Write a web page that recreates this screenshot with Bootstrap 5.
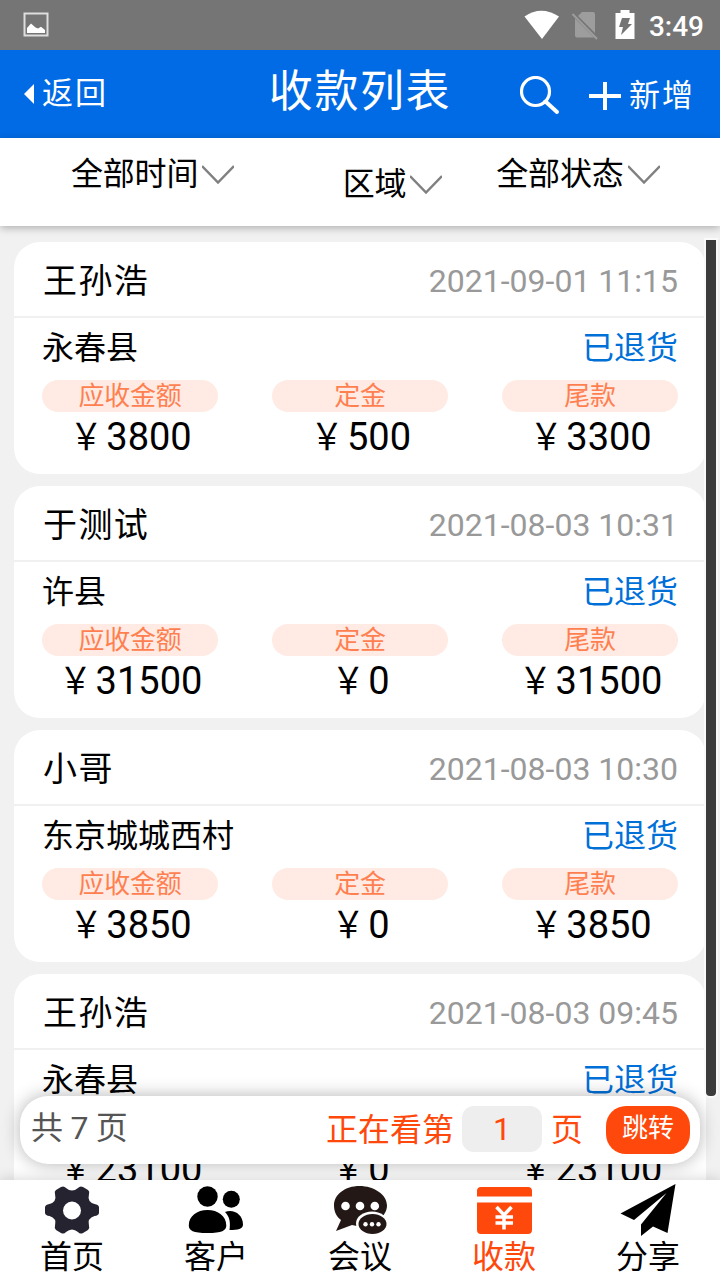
<!DOCTYPE html>
<html lang="zh-CN">
<head>
<meta charset="utf-8">
<meta name="viewport" content="width=device-width, initial-scale=1">
<title>收款列表</title>
<link href="https://cdn.jsdelivr.net/npm/bootstrap@5.3.0/dist/css/bootstrap.min.css" rel="stylesheet">
<style>
  body { font-family: Roboto, "Noto Sans CJK SC", sans-serif; font-size: 32px; line-height: 40px; color: #000; background: #f1f1f1; }
  svg { display: block; flex: none; }
  .screen { height: 1280px; }
  .status-bar { height: 50px; background: #757575; padding: 0 16px 0 23px; }
  .clock { font-size: 28px; font-weight: 500; line-height: 50px; padding-top: 3px; margin-left: 14px; }
  .wifi { margin-right: 2px; }
  .sim { margin: 0 16px 0 9px; }
  .title-bar { height: 88px; background: #006be5; padding: 0 25px 0 24px; }
  .page-title { font-size: 44px; line-height: 85px; letter-spacing: 1.6px; padding-left: 1px; }
  .side-link { font-size: 31px; letter-spacing: 2px; }
  .new-icon { margin-left: 29px; }
  .filters { height: 88px; padding: 16px 60px 0 71px; box-shadow: 0 2px 8px rgba(0,0,0,.28); z-index: 2; }
  .filters span { letter-spacing: -.2px; }
  .filters svg { margin: 2px 0 0 4px; }
  .filter-mid { margin: 10px 54px 0 108.500px; }
  .receipts { padding: 16px 14px 0; gap: 12px; }
  .receipt { height: 232px; border-radius: 26px; flex: none; }
  .receipt-head { height: 76px; border-bottom: 2px solid #f0f0f0; padding: 4px 28px 0; }
  .customer { font-size: 34px; letter-spacing: 1.4px; padding-left: 1px; }
  .stamp { color: #999; }
  .receipt-body { padding: 10px 28px 0; }
  .state { color: #0070d9; }
  .amounts { margin-top: 12px; }
  .amount { width: 176px; }
  .amount-tag { height: 32px; line-height: 33px; font-size: 26px; letter-spacing: -.2px; color: #ff7f50; background: #ffebe4; }
  .amount-value { font-size: 38px; line-height: 50px; }
  .yen { display: inline-block; width: 38px; font-size: 33px; line-height: 40px; padding-right: 2px; transform: translateY(-1px) scaleY(1.12); }
  .scroll-thumb { right: 2px; top: 238px; width: 14px; height: 860px; background: #3c3c3c; border: 2px solid #fafafa; border-radius: 0 0 6px 6px; z-index: 3; }
  .pager { left: 20px; right: 20px; top: 1096px; height: 68px; border-radius: 28px; box-shadow: 0 0 18px rgba(0,0,0,.3); padding: 0 10px 0 11px; z-index: 4; color: #ff490c; }
  .pager-total { color: #555; word-spacing: -.5px; padding-bottom: 5px; }
  .page-input { width: 80px; height: 46px; line-height: 47px; border-radius: 12px; background: #eee; margin: 0 9px 2px 8px; }
  .jump { width: 84px; height: 48px; line-height: 45px; border-radius: 20px; background: #ff490c; font-size: 26px; margin-left: 23px; }
  .tabs { top: 1180px; height: 100px; z-index: 5; box-shadow: 0 0 14px rgba(0,0,0,.18); }
  .tab-item { padding-top: 4px; }
  .tab-item span { line-height: 43px; }
  .tab-active { color: #ff490c; }
</style>
</head>
<body>
<div class="screen position-relative overflow-hidden d-flex flex-column">

  <div class="status-bar d-flex align-items-center justify-content-between text-white flex-shrink-0">
    <svg width="26" height="26" viewBox="0 0 26 26"><rect x="1.5" y="1.5" width="23" height="22" fill="none" stroke="#dedede" stroke-width="2"/><path d="M4 21V16l4-4.500 4.500 4 2.500 1 3-1.700L22 18v3z" fill="#fff"/></svg>
    <div class="d-flex align-items-center">
      <svg class="wifi" width="36" height="30" viewBox="0 0 36 30"><path d="M.5 6.500Q17-5 35 6.500L18 29z" fill="#fff"/></svg>
      <svg class="sim" width="28" height="30" viewBox="0 0 28 30"><path d="M11 2h11q2 0 2 2v19L7 6zM4 8.500l19 19H6q-2 0-2-2z" fill="#9d9d9d"/><path d="M1.500 4L26 29" stroke="#9d9d9d" stroke-width="2"/></svg>
      <svg width="20" height="30" viewBox="0 0 20 30"><path d="M5.500 0h9v3H19.500V29H.5V3h5z" fill="#fff"/><path d="M7 8h8l-2 6h4L6 25l2-8H4z" fill="#757575"/></svg>
      <span class="clock">3:49</span>
    </div>
  </div>

  <header class="title-bar row g-0 text-white flex-shrink-0">
    <div class="col-4 d-flex align-items-center side-link">
      <svg class="me-2" width="10" height="20" viewBox="0 0 10 20"><path d="M10 0v20L0 10z" fill="#fff"/></svg><span>返回</span>
    </div>
    <h1 class="page-title col-4 text-center text-nowrap fw-normal m-0">收款列表</h1>
    <div class="col-4 d-flex align-items-center justify-content-end side-link pt-1">
      <svg width="40" height="40" viewBox="0 0 40 40" fill="none" stroke="#fff"><circle cx="15.500" cy="15.500" r="14" stroke-width="3.200"/><path d="M25.500 25.500l11.500 10.500" stroke-width="4" stroke-linecap="round"/></svg>
      <svg class="new-icon" width="32" height="30" viewBox="0 0 32 30"><path d="M0 15h32M16 1v28" stroke="#fff" stroke-width="4"/></svg>
      <span class="ms-2">新增</span>
    </div>
  </header>

  <nav class="filters d-flex align-items-start bg-white position-relative flex-shrink-0 text-nowrap">
    <div class="d-flex align-items-center"><span>全部时间</span><svg width="32" height="20" viewBox="0 0 32 20"><path d="M0 1l16 16.500L32 1" fill="none" stroke="#808080" stroke-width="2.500"/></svg></div>
    <div class="filter-mid d-flex align-items-center"><span>区域</span><svg width="32" height="20" viewBox="0 0 32 20"><path d="M0 1l16 16.500L32 1" fill="none" stroke="#808080" stroke-width="2.500"/></svg></div>
    <div class="d-flex align-items-center"><span>全部状态</span><svg width="32" height="20" viewBox="0 0 32 20"><path d="M0 1l16 16.500L32 1" fill="none" stroke="#808080" stroke-width="2.500"/></svg></div>
  </nav>

  <main class="receipts d-flex flex-column" id="receipts"></main>

  <div class="scroll-thumb position-absolute"></div>

  <div class="pager position-absolute bg-white d-flex align-items-center">
    <span class="pager-total me-auto">共 7 页</span>
    <span>正在看第</span>
    <span class="page-input text-center">1</span>
    <span>页</span>
    <span class="jump text-center text-white">跳转</span>
  </div>

  <footer class="tabs position-absolute start-0 end-0 bg-white d-flex text-center">
    <div class="tab-item col d-flex flex-column align-items-center">
      <svg width="56" height="52" viewBox="0 0 56 52"><path fill="#25232f" fill-rule="evenodd" d="M17 3q3-1.500 5 1 6 5 12 0 2-2.500 5-1l5 3q2 1.500 1 4-2 8 5.500 10 4 .5 4.500 3v6q-.5 2.500-4.500 3-7.500 2-5.500 10 1 2.500-1 4l-5 3q-3 1.500-5-1-6-5-12 0-2 2.500-5 1l-5-3q-2-1.500-1-4 2-8-5.500-10-4-.5-4.500-3v-6q.5-2.500 4.500-3 7.500-2 5.500-10-1-2.500 1-4zM28 17.500a9 9 0 1 0 0 18 9 9 0 1 0 0-18z"/></svg>
      <span>首页</span>
    </div>
    <div class="tab-item col d-flex flex-column align-items-center">
      <svg width="56" height="52" viewBox="0 0 56 52"><circle cx="19.500" cy="12.500" r="10.200"/><circle cx="43.300" cy="15.300" r="8.500"/><path d="M.8 41.500C.8 32 9 26 19.500 26S38.300 32 38.300 41.500C38.300 46.500 34 49 19.500 49S.8 46.500.8 41.500zM37 28c8-3.500 18 2 18 12.500 0 4.500-5 5.500-13.500 5.500 1-7 .5-13-4.500-18z"/></svg>
      <span>客户</span>
    </div>
    <div class="tab-item col d-flex flex-column align-items-center">
      <svg width="56" height="52" viewBox="0 0 56 52"><path fill="#231815" d="M27.500 2C42 2 55 10.500 55 21.500S42 42 28 42q-5 0-8-1L4 47l5-11C4 32.500 2 27 2 21.500 2 10.500 13 2 27.500 2z"/><ellipse cx="40" cy="39.500" rx="16" ry="12" fill="#fff"/><ellipse cx="40.500" cy="40" rx="14" ry="10" fill="#231815"/><g fill="#fff"><circle cx="13.500" cy="22" r="4.300"/><circle cx="28" cy="22" r="4.300"/><circle cx="42.800" cy="22" r="4.300"/><circle cx="33.500" cy="40.300" r="2.200"/><circle cx="40" cy="40.300" r="2.200"/><circle cx="46.500" cy="40.300" r="2.200"/></g></svg>
      <span>会议</span>
    </div>
    <div class="tab-item tab-active col d-flex flex-column align-items-center">
      <svg width="56" height="52" viewBox="0 0 56 52"><path fill="#ff490c" d="M1 12.500V7q0-4 4-4h47q4 0 4 4v5.500zM1 18.500h55V46q0 4-4 4H5q-4 0-4-4z"/><path d="M20.500 23l7.500 8 7.500-8M28 31v14.500M19.500 33h17.500M19.500 39h17.500" fill="none" stroke="#fff" stroke-width="3.500"/></svg>
      <span>收款</span>
    </div>
    <div class="tab-item col d-flex flex-column align-items-center">
      <svg width="56" height="52" viewBox="0 0 56 52"><path d="M55.500 0L47.500 49 33 42.500 21 52V40.500L46.500 9 14 36 .5 29.500z"/></svg>
      <span>分享</span>
    </div>
  </footer>
</div>

<script>
  const receipts = [
    ["王孙浩", "2021-09-01 11:15", "永春县", 3800, 500, 3300],
    ["于测试", "2021-08-03 10:31", "许县", 31500, 0, 31500],
    ["小哥", "2021-08-03 10:30", "东京城城西村", 3850, 0, 3850],
    ["王孙浩", "2021-08-03 09:45", "永春县", 23100, 0, 23100]
  ];
  const amount = (label, value) => `
    <div class="amount text-center">
      <div class="amount-tag rounded-pill">${label}</div>
      <div class="amount-value"><span class="yen">￥</span>${value}</div>
    </div>`;
  document.getElementById("receipts").innerHTML = receipts.map(([name, time, place, due, deposit, rest]) => `
    <article class="receipt bg-white">
      <div class="receipt-head d-flex align-items-center justify-content-between">
        <span class="customer">${name}</span><time class="stamp">${time}</time>
      </div>
      <div class="receipt-body">
        <div class="d-flex justify-content-between"><span>${place}</span><span class="state">已退货</span></div>
        <div class="amounts d-flex justify-content-between">
          ${amount("应收金额", due)}${amount("定金", deposit)}${amount("尾款", rest)}
        </div>
      </div>
    </article>`).join("");
</script>
<script src="https://cdn.jsdelivr.net/npm/bootstrap@5.3.0/dist/js/bootstrap.bundle.min.js"></script>
</body>
</html>
